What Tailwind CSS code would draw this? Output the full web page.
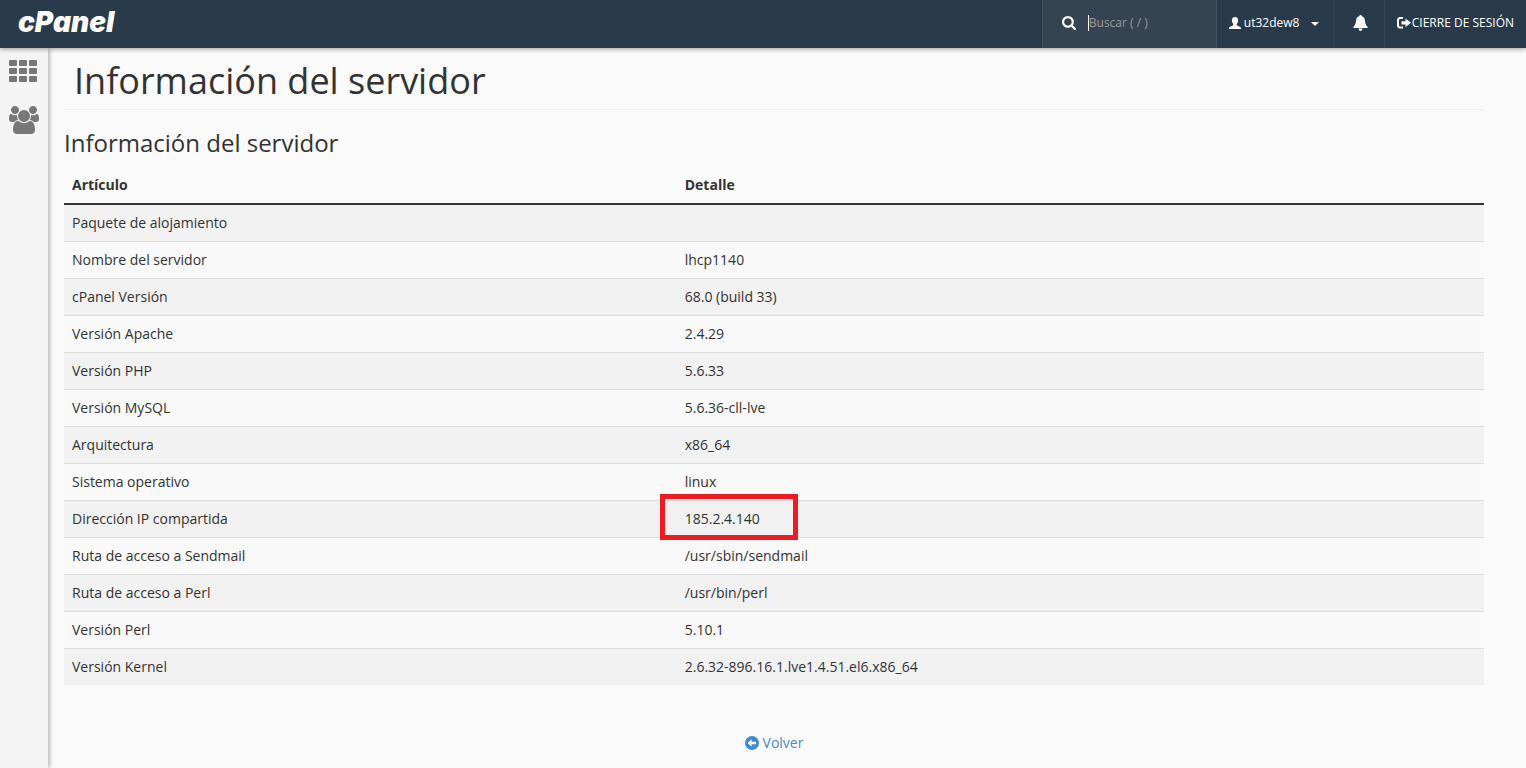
<!DOCTYPE html>
<html lang="es">
<head>
<meta charset="utf-8">
<meta name="viewport" content="width=device-width, initial-scale=1">
<title>cPanel - Información del servidor</title>
<script src="https://cdn.jsdelivr.net/npm/@tailwindcss/browser@4"></script>
</head>
<body class="flex min-h-screen flex-col bg-[#fafafa] font-['Open_Sans',sans-serif] text-sm leading-5 text-[#333]">
<header class="relative z-10 flex h-12 items-stretch bg-[#293a4a] text-xs text-white shadow-[0_1px_5px_rgba(0,0,0,0.4)]">
  <a href="#" class="flex items-center pb-1 pl-[18px] font-['Inter',sans-serif] text-[28px] leading-none font-black italic">cPanel</a>
  <form class="ml-auto flex w-[175px] items-center gap-3 border-x border-[#435160] bg-[#354453] pb-[2px] pl-[19px]">
    <svg class="size-[14px] shrink-0" viewBox="64 128 1664 1664" fill="currentColor" aria-hidden="true"><path d="M1216 832q0-185-131.5-316.5t-316.5-131.5-316.5 131.5-131.5 316.5 131.5 316.5 316.5 131.5 316.5-131.5 131.5-316.5zm512 832q0 52-38 90t-90 38q-54 0-90-38l-343-342q-179 124-399 124-143 0-273.5-55.5t-225-150-150-225-55.5-273.5 55.5-273.5 150-225 225-150 273.5-55.5 273.5 55.5 225 150 150 225 55.5 273.5q0 220-124 399l343 343q37 37 37 90z"/></svg>
    <div class="flex min-w-0 items-center border-l border-white">
      <input type="text" aria-label="Buscar" placeholder="Buscar ( / )" class="h-4 w-full bg-transparent leading-4 outline-none placeholder:text-[#999]">
    </div>
  </form>
  <button type="button" class="flex w-[117px] items-center border-r border-[#354453] pb-[2px] pl-3">
    <svg class="mr-[3px] h-3 w-3" viewBox="0 0 12 12" fill="currentColor" aria-hidden="true"><path d="M6 0C3.900 0 2.900 1.400 2.900 3.200c0 1.700.6 2.800 1.400 3.700v1C4.300 8.700 1.700 9 .7 9.900.1 10.400 0 11 0 12h12c0-1-.1-1.600-.7-2.100C10.300 9 7.700 8.700 7.700 7.900v-1C8.500 6 9.100 4.900 9.100 3.200 9.100 1.400 8.100 0 6 0z"/></svg>
    ut32dew8
    <svg class="mt-[2px] ml-3 h-1 w-2" viewBox="0 0 8 4" fill="currentColor" aria-hidden="true"><path d="M0 0h8L4 4z"/></svg>
  </button>
  <button type="button" aria-label="Notificaciones" class="flex w-[51px] items-center justify-center border-r border-[#354453] pb-[2px]">
    <svg class="ml-1 h-4 w-[15px]" viewBox="0 0 15 16" fill="currentColor" aria-hidden="true"><path d="M7.500 0C6.800 0 6.300.5 6.300 1.300 4.200 1.900 3.300 3.300 3.100 5.200 2.800 8.200 2.300 9.800.5 11.800c-.4.500-.3 1.200.4 1.200h13.200c.7 0 .8-.7.4-1.200-1.800-2-2.300-3.600-2.600-6.600-.2-1.900-1.100-3.300-3.200-3.900C8.700.5 8.200 0 7.500 0zM5.500 13.500c.2 1.500 1 2.500 2 2.500s1.800-1 2-2.500z"/></svg>
  </button>
  <a href="#" class="flex items-center gap-px pr-3 pb-[2px] pl-3">
    <svg class="h-3 w-[14px]" viewBox="0 0 14 12" aria-hidden="true"><path d="M6 1H3.200A2.200 2.200 0 0 0 1 3.200v5.100a2.200 2.200 0 0 0 2.200 2.200H6" fill="none" stroke="currentColor" stroke-width="2"/><path d="M4.500 4.200h4V1.600L14 5.800 8.500 10V7.400h-4z" fill="currentColor"/></svg>
    CIERRE DE SESIÓN
  </a>
</header>
<div class="flex flex-1">
  <nav aria-label="Principal" class="flex w-12 shrink-0 flex-col items-start gap-6 bg-[#f4f4f4] pt-3 pl-[9px] text-[#777] shadow-[1px_0_5px_rgba(0,0,0,0.35)]">
    <a href="#" aria-label="Inicio"><svg class="h-[22px] w-7" viewBox="0 0 28 22" fill="currentColor" aria-hidden="true"><g id="row"><rect width="8" height="6" rx="1"/><rect x="10" width="8" height="6" rx="1"/><rect x="20" width="8" height="6" rx="1"/></g><use href="#row" y="8"/><use href="#row" y="16"/></svg></a>
    <a href="#" aria-label="Usuarios"><svg class="h-7 w-[30px]" viewBox="64 0 1920 1792" fill="currentColor" aria-hidden="true"><path d="M657 896q-162 5-265 128h-134q-82 0-138-40.5t-56-118.500q0-353 124-353 6 0 43.500 21t97.500 42.500 119 21.500q67 0 133-23-5 37-5 66 0 139 81 256zm1071 637q0 120-73 189.500t-194 69.500h-874q-121 0-194-69.500t-73-189.500q0-53 3.500-103.500t14-109 26.500-108.500 43-97.500 62-81 85.500-53.500 111.500-20q10 0 43 21.500t73 48 107 48 135 21.500 135-21.500 107-48 73-48 43-21.500q61 0 111.500 20t85.500 53.500 62 81 43 97.500 26.500 108.500 14 109 3.500 103.500zm-1024-1277q0 106-75 181t-181 75-181-75-75-181 75-181 181-75 181 75 75 181zm704 384q0 159-112.500 271.500t-271.500 112.500-271.500-112.500-112.500-271.500 112.500-271.500 271.500-112.500 271.500 112.500 112.500 271.500zm576 225q0 78-56 118.500t-138 40.500h-134q-103-123-265-128 81-117 81-256 0-29-5-66 66 23 133 23 59 0 119-21.500t97.500-42.500 43.500-21q124 0 124 353zm-128-609q0 106-75 181t-181 75-181-75-75-181 75-181 181-75 181 75 75 181z"/></svg></a>
  </nav>
  <main class="min-w-0 flex-1 pr-[42px] pl-4">
    <h1 class="border-b border-[#eee] px-[10px] pt-[13px] pb-2 text-4xl leading-10">Información del servidor</h1>
    <h2 class="pt-[19px] pb-[10px] text-2xl leading-7">Información del servidor</h2>
    <table class="w-full table-fixed border-collapse text-left [&_td]:p-2 [&_th]:p-2">
      <colgroup><col class="w-[43.15%]"><col></colgroup>
      <thead><tr class="border-b-2 border-[#333]"><th>Artículo</th><th>Detalle</th></tr></thead>
      <tbody class="divide-y divide-[#ddd] [&>tr:nth-child(even)]:bg-[#f9f9f9] [&>tr:nth-child(odd)]:bg-[#f1f1f1]">
        <tr><td>Paquete de alojamiento</td><td></td></tr>
        <tr><td>Nombre del servidor</td><td>lhcp1140</td></tr>
        <tr><td>cPanel Versión</td><td>68.0 (build 33)</td></tr>
        <tr><td>Versión Apache</td><td>2.4.29</td></tr>
        <tr><td>Versión PHP</td><td>5.6.33</td></tr>
        <tr><td>Versión MySQL</td><td>5.6.36-cll-lve</td></tr>
        <tr><td>Arquitectura</td><td>x86_64</td></tr>
        <tr><td>Sistema operativo</td><td>linux</td></tr>
        <tr><td>Dirección IP compartida</td><td><span class="relative block">185.2.4.140<span class="absolute -top-[15px] -left-[25px] h-[46px] w-[138px] border-5 border-[#ed1c24]"></span></span></td></tr>
        <tr><td>Ruta de acceso a Sendmail</td><td>/usr/sbin/sendmail</td></tr>
        <tr><td>Ruta de acceso a Perl</td><td>/usr/bin/perl</td></tr>
        <tr><td>Versión Perl</td><td>5.10.1</td></tr>
        <tr><td>Versión Kernel</td><td>2.6.32-896.16.1.lve1.4.51.el6.x86_64</td></tr>
      </tbody>
    </table>
    <div class="flex justify-center pt-12">
      <a href="#" class="flex items-center gap-1 text-[#428bca]"><svg class="size-[14px]" viewBox="0 0 14 14" aria-hidden="true"><circle cx="7" cy="7" r="7" fill="currentColor"/><path d="M2.700 7L6.500 3.300V5.800H11V8.200H6.500V10.700z" fill="#fff"/></svg>Volver</a>
    </div>
  </main>
</div>
</body>
</html>
